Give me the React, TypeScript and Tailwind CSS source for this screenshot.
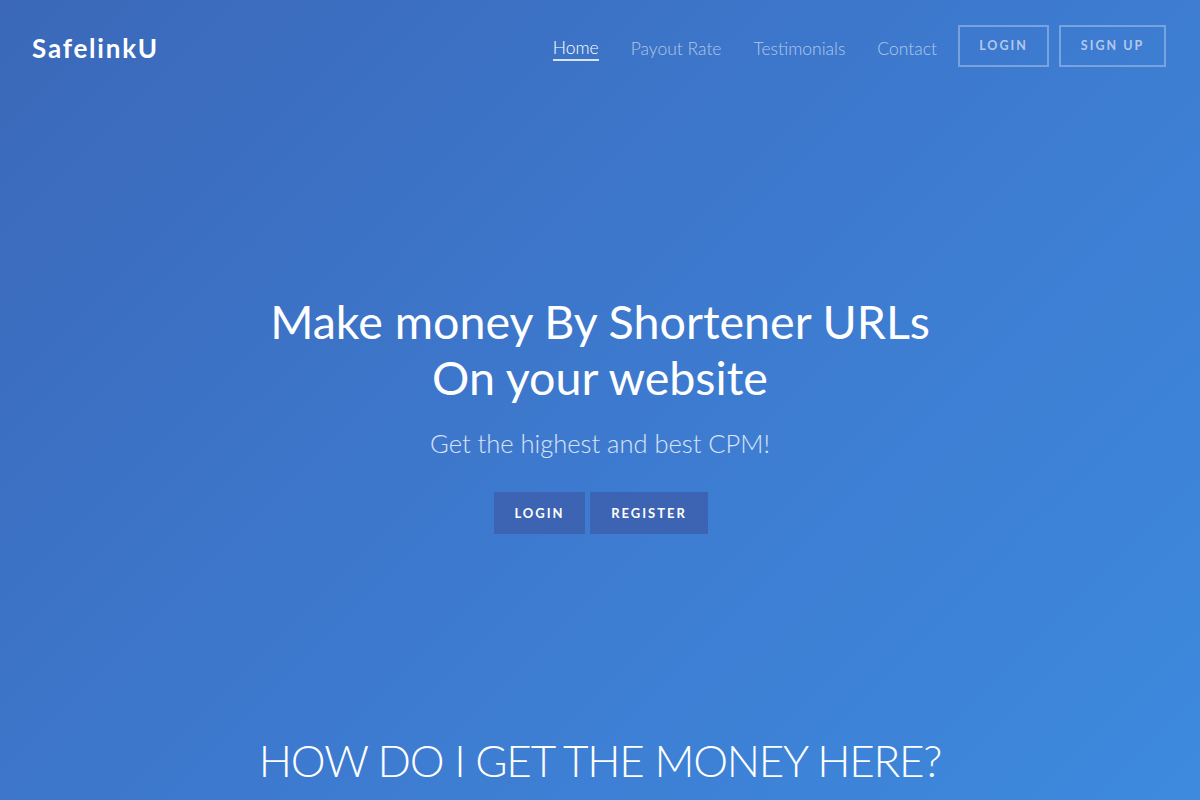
export default function App() {
  const nav = ['Home', 'Payout Rate', 'Testimonials', 'Contact']

  return (
    <div
      className="min-h-[800px] w-full overflow-hidden bg-[linear-gradient(135deg,#3b68b9_0%,#3d7bd0_55%,#3d8ade_100%)] text-white"
      style={{ fontFamily: 'Lato, "Noto Sans", sans-serif' }}
    >
      {/* header */}
      <header className="flex h-[92px] items-center justify-between pl-8 pr-[34px]">
        <div className="mt-[4px] text-[26px] font-bold tracking-[1.8px]">SafelinkU</div>
        <nav className="flex items-center">
          {nav.map((item, i) => (
            <a
              key={item}
              href="#"
              className={`mr-[32px] mt-[6px] text-[17.5px] font-light leading-[22px] ${
                i === 0 ? 'border-b-2 border-white/80 text-white' : 'text-white/60'
              }`}
            >
              {item}
            </a>
          ))}
          <button className="ml-[-11px] h-[42px] w-[91px] border-2 border-white/30 text-[12.5px] font-bold tracking-[2px] text-white/60">
            LOGIN
          </button>
          <button className="ml-[10px] h-[42px] w-[107px] border-2 border-white/30 text-[12.5px] font-bold tracking-[2px] text-white/60">
            SIGN UP
          </button>
        </nav>
      </header>

      {/* hero */}
      <section className="flex flex-col items-center pt-[201px] text-center">
        <h1 className="text-[46.6px] font-normal leading-[56px]">
          Make money By Shortener URLs
          <br />
          On your website
        </h1>
        <p className="mt-[19px] text-[25.5px] font-light text-white/80">Get the highest and best CPM!</p>
        <div className="mt-[30px] flex gap-[5px]">
          <button className="ml-[2px] h-[42px] w-[91px] bg-[#3d63b3] text-[13px] font-bold tracking-[2px]">LOGIN</button>
          <button className="h-[42px] w-[118px] bg-[#3d63b3] text-[13px] font-bold tracking-[2px]">REGISTER</button>
        </div>
      </section>

      {/* next section */}
      <section className="pt-[198px] text-center">
        <h2 className="text-[44px] font-light leading-[56px] tracking-[-1.2px]">HOW DO I GET THE MONEY HERE?</h2>
      </section>
    </div>
  )
}
